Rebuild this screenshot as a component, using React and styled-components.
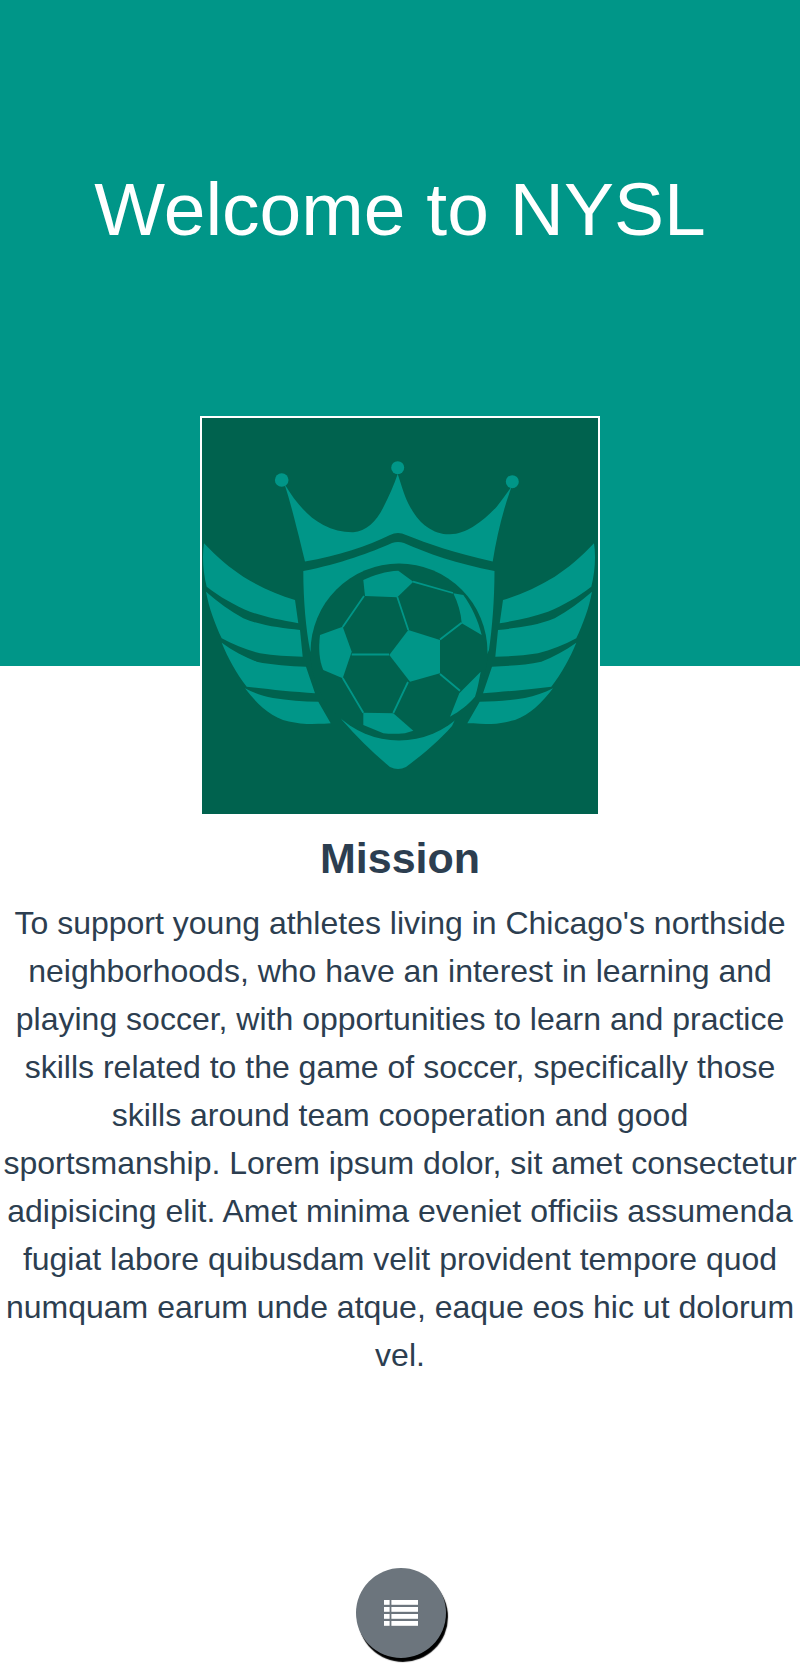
import React from 'react';
import styled, { createGlobalStyle } from 'styled-components';

const GlobalStyle = createGlobalStyle`
  body {
    margin: 0;
    background: #fff;
    font-family: 'Liberation Sans', Arial, sans-serif;
  }
`

const Wrapper = styled.main`
  min-height: 100vh;
  display: flex;
  flex-direction: column;
  align-items: center;
`

const Header = styled.header`
  align-self: stretch;
  height: 666px;
  box-sizing: border-box;
  padding-top: 161px;
  background: #009688;
  text-align: center;
`

const Title = styled.h1`
  margin: 0;
  color: #fff;
  font-size: 75px;
  font-weight: 400;
  line-height: 96px;
`

const LogoFrame = styled.div`
  width: 396px;
  height: 396px;
  margin-top: -250px;
  border: 2px solid #fff;
  background: #00624e;
  line-height: 0;
`

const MissionTitle = styled.h2`
  margin: 18px 0 0;
  color: #2c3e50;
  font-size: 43px;
  font-weight: 700;
  line-height: 48px;
  text-align: center;
`

const MissionText = styled.p`
  margin: 17px 0 0;
  width: 100%;
  color: #2c3e50;
  font-size: 32px;
  line-height: 48px;
  text-align: center;
`

const MenuButton = styled.button`
  position: fixed;
  left: 356px;
  bottom: 8px;
  width: 90px;
  height: 90px;
  padding: 0;
  display: flex;
  align-items: center;
  justify-content: center;
  border: none;
  border-radius: 50%;
  background: #6c757d;
  box-shadow: 2px 4px 1px #000;
`

const Feathers = () => (
  <>
    <path d="M204 543.3 C218 558 230 568 243.3 576.7 C260 587 278 595 295 600 L298.3 623.3 C280 620 265 617 250 611.7 C234 605 220 597 206.7 586.7 C203 572 202 556 204 543.3 Z" />
    <path d="M206 591.7 C218 602 230 611 243.3 618.3 C262 626 282 628 300 630 L302.7 656.7 C288 656.5 274 655.5 260 653.3 C247 650 234 645 221.7 638.3 C215 624 209 608 206 591.7 Z" />
    <path d="M221.7 642.7 C233 651 245 657 256.7 661.7 C272 665 290 666 306 666.7 L315 693.3 C305 692.5 294 691.5 283 690.7 C270 689.5 258 688 246.7 686.7 C236 673 228 658 221.7 642.7 Z" />
    <path d="M245 688.3 C254 693 263 696 273 698 C288 700.5 303 701.5 318.3 701.7 L330.7 723.3 C322 724 314 724 306.7 724 C298 723.5 291 722 283 720 C275 717 269 713 263 708 C256 702 250 695 245 688.3 Z" />
  </>
)

const Logo = () => (
  <svg width="396" height="396" viewBox="202 418 396 396" fill="#009688">
    <circle cx="281.7" cy="480" r="6.8" />
    <circle cx="397.7" cy="467.7" r="6.5" />
    <circle cx="512.3" cy="481.7" r="6.5" />
    <path d="M284.5 484 C296 503 308 517 323.3 525 C333 530 343 532.5 353.3 532.3 C366 531 376 522 383 508 C389 496 394 485 397.7 474 C402 487 405 498 410 506.7 C416 517 421 523 426.7 526.7 C434 532 442 534.5 450 534.3 C458 534 466 531 473 526.7 C482 521 490 514 496.7 506.7 C502 500 507 493 511.7 486.5 C503 510 497 535 492.7 561.5 C455 553 428 544 406 535 Q398 531 390 535 C368 546 338 556 305 561.5 C302 550 300 540 296.7 528 C293 513 289 498 284.5 484 Z" />
    <path d="M303.3 571 C340 564 372 552 392 543 Q398 541 404 543 C426 553 458 564 494.5 571 C494.5 600 492 630 489 650 L452 726 C438 742 422 755 406 767 Q398 771 390 767 C373 753 357 737 342 720 L310 650 C306 630 303.3 600 303.3 571 Z" />
    <circle cx="399" cy="652" r="88.5" fill="#00624e" />

    {/* ball */}
    <path d="M363.3 580 C374 575 386 571 398.3 570.7 L413.3 581.7 L397.3 597.3 L365 596 Z" />
    <path d="M408.3 630 L440 640 L440 673.3 L410 681.7 L389.3 655 Z" />
    <path d="M320 635 L342.7 626.7 L351.7 651.7 L342.7 678.3 L323.3 670 C319 660 318.5 648 320 635 Z" />
    <path d="M363.3 712.7 L393.3 713.3 L413.3 730.7 L405 733.3 C396 734 390 734 383.3 733.3 L363.3 725 Z" />
    <path d="M453.3 593.3 L463.3 595 C472 607 478 620 481.7 635 L461.7 623.3 C461 613 458 603 453.3 593.3 Z" />
    <path d="M480.7 671.7 C479 680 478 688 475 696.7 C468 705 460 711 450 716.7 L459.3 693.3 Z" />
    <path d="M364 596 L342.7 627 M397.3 597 L408.3 630 M351.7 654.5 L389 654.5 M342.7 678 L363.3 712.7 M408 682 L393.3 713 M440 639.5 L461.7 622.7 M440 674 L460 690.7 M413 581.7 L453 593"
      fill="none" stroke="#009688" strokeWidth="1.8" />

    <Feathers />
    <g transform="translate(798 0) scale(-1 1)">
      <Feathers />
    </g>
  </svg>
)

const ListIcon = () => (
  <svg width="34" height="26" viewBox="0 0 34 26" fill="#fff">
    {[0, 7, 14, 21].map((y) => (
      <g key={y}>
        <rect x="0" y={y} width="5.6" height="4.8" />
        <rect x="7.4" y={y} width="26.6" height="4.8" />
      </g>
    ))}
  </svg>
)

const App = () => {
  return (
    <Wrapper>
      <GlobalStyle />
      <Header>
        <Title>Welcome to NYSL</Title>
      </Header>
      <LogoFrame>
        <Logo />
      </LogoFrame>
      <MissionTitle>Mission</MissionTitle>
      <MissionText>
        To support young athletes living in Chicago's northside neighborhoods, who have an interest in learning and playing soccer, with opportunities to learn and practice skills related to the game of soccer, specifically those skills around team cooperation and good sportsmanship. Lorem ipsum dolor, sit amet consectetur adipisicing elit. Amet minima eveniet officiis assumenda fugiat labore quibusdam velit provident tempore quod numquam earum unde atque, eaque eos hic ut dolorum vel.
      </MissionText>
      <MenuButton aria-label="Menu">
        <ListIcon />
      </MenuButton>
    </Wrapper>
  )
}

export default App;
